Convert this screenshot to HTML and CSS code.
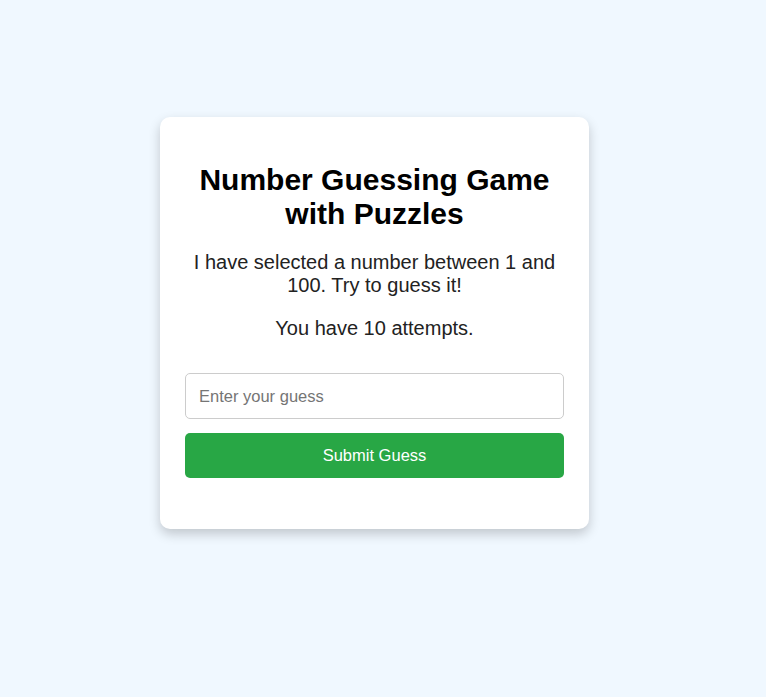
FILE: index.html
```html
<!DOCTYPE html>
<html lang="en">
<head>
<meta charset="utf-8">
<title>Number Guessing Game with Puzzles</title>
<link rel="stylesheet" href="styles.css">
</head>
<body>
<div class="page">
  <div class="card">
    <h1 class="title">Number Guessing Game with Puzzles</h1>
    <p class="text">I have selected a number between 1 and 100. Try to guess it!</p>
    <p class="text">You have 10 attempts.</p>
    <div class="form">
      <input class="guess" type="number" placeholder="Enter your guess">
      <button class="submit" type="button">Submit Guess</button>
    </div>
  </div>
</div>
</body>
</html>
```
FILE: styles.css
```css
html, body {
  margin: 0;
  padding: 0;
  background: #f0f8ff;
  font-family: "Liberation Sans", Arial, sans-serif;
}
.page {
  display: flex;
  justify-content: center;
  align-items: flex-start;
  padding: 117px 17px 60px 0;
}
.card {
  box-sizing: border-box;
  width: 429px;
  background: #fff;
  border-radius: 10px;
  box-shadow: 0 5px 12px rgba(0, 0, 0, 0.2);
  padding: 26px 25px 51px;
  text-align: center;
}
.title {
  font-size: 30px;
  font-weight: bold;
  margin: 20px 0;
  color: #000;
}
.text {
  font-size: 20px;
  margin: 20px 0;
  color: #222;
}
.form {
  display: flex;
  flex-direction: column;
  gap: 14px;
  padding-top: 13px;
}
.guess {
  box-sizing: border-box;
  width: 100%;
  height: 46px;
  padding: 0 13px;
  font-family: "Liberation Sans", Arial, sans-serif;
  font-size: 16.5px;
  border: 1px solid #ccc;
  border-radius: 5px;
  outline: none;
  color: #000;
}
.guess::placeholder {
  color: #757575;
}
.submit {
  box-sizing: border-box;
  width: 100%;
  height: 45px;
  border: none;
  border-radius: 5px;
  background: #28a745;
  color: #fff;
  font-family: "Liberation Sans", Arial, sans-serif;
  font-size: 16.5px;
  cursor: pointer;
}
```
